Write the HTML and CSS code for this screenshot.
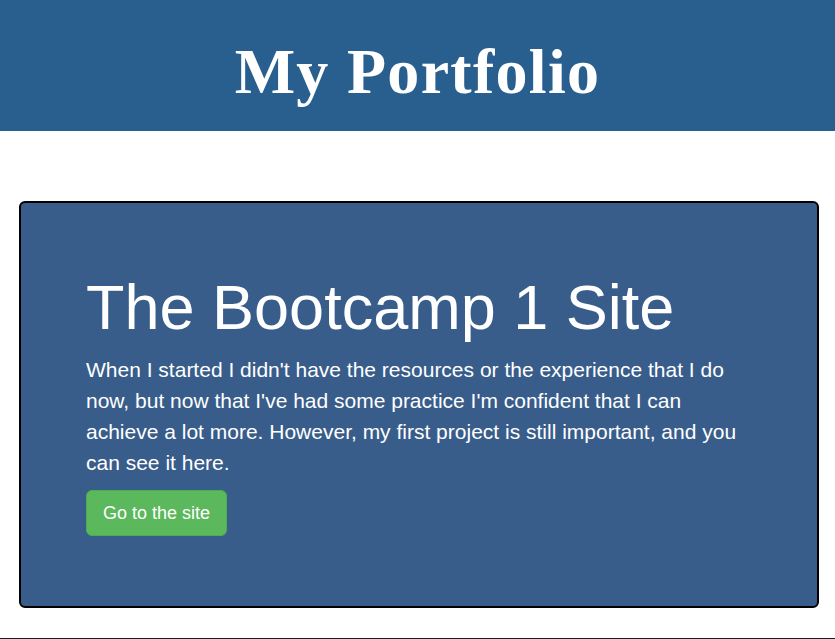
FILE: index.html
```html
<!DOCTYPE html>
<html lang="en">
<head>
<meta charset="utf-8">
<title>My Portfolio</title>
<link rel="stylesheet" href="styles.css">
</head>
<body>
<header class="site-header">
  <h1 class="site-title">My Portfolio</h1>
</header>
<main class="content">
  <section class="project">
    <h2 class="project-title">The Bootcamp 1 Site</h2>
    <p class="project-text">When I started I didn't have the resources or the experience that I do now, but now that I've had some practice I'm confident that I can achieve a lot more. However, my first project is still important, and you can see it here.</p>
    <a class="btn" href="#">Go to the site</a>
  </section>
</main>
<div class="next-section"></div>
</body>
</html>
```
FILE: styles.css
```css
html, body {
  margin: 0;
  padding: 0;
}
body {
  font-family: "Liberation Sans", Arial, sans-serif;
  background: #ffffff;
  color: #333;
}
.site-header {
  background: #285f8f;
  height: 131px;
  box-sizing: border-box;
  padding-top: 13px;
  display: flex;
  align-items: center;
  justify-content: center;
}
.site-title {
  margin: 0;
  font-family: "Liberation Serif", "DejaVu Serif", serif;
  font-weight: 700;
  font-size: 64px;
  letter-spacing: 1.3px;
  color: #ffffff;
  line-height: 1;
}
.content {
  padding: 70px 16px 30px 19px;
}
.project {
  background: #385d8a;
  border: 2px solid #000;
  border-radius: 6px;
  padding: 50px 60px 70px 65px;
  color: #ffffff;
}
.project-title {
  margin: 20px 0 12px;
  font-size: 63px;
  font-weight: 400;
  line-height: 1.1;
}
.project-text {
  margin: 0 0 12px;
  font-size: 21px;
  line-height: 31px;
  max-width: 660px;
}
.btn {
  display: inline-block;
  background: #5cb85c;
  border: 1px solid #4cae4c;
  border-radius: 6px;
  color: #fff;
  text-decoration: none;
  font-size: 18px;
  line-height: 24px;
  padding: 10px 16px;
}
.next-section {
  border-top: 2px solid #1e1b22;
  height: 200px;
}
```
